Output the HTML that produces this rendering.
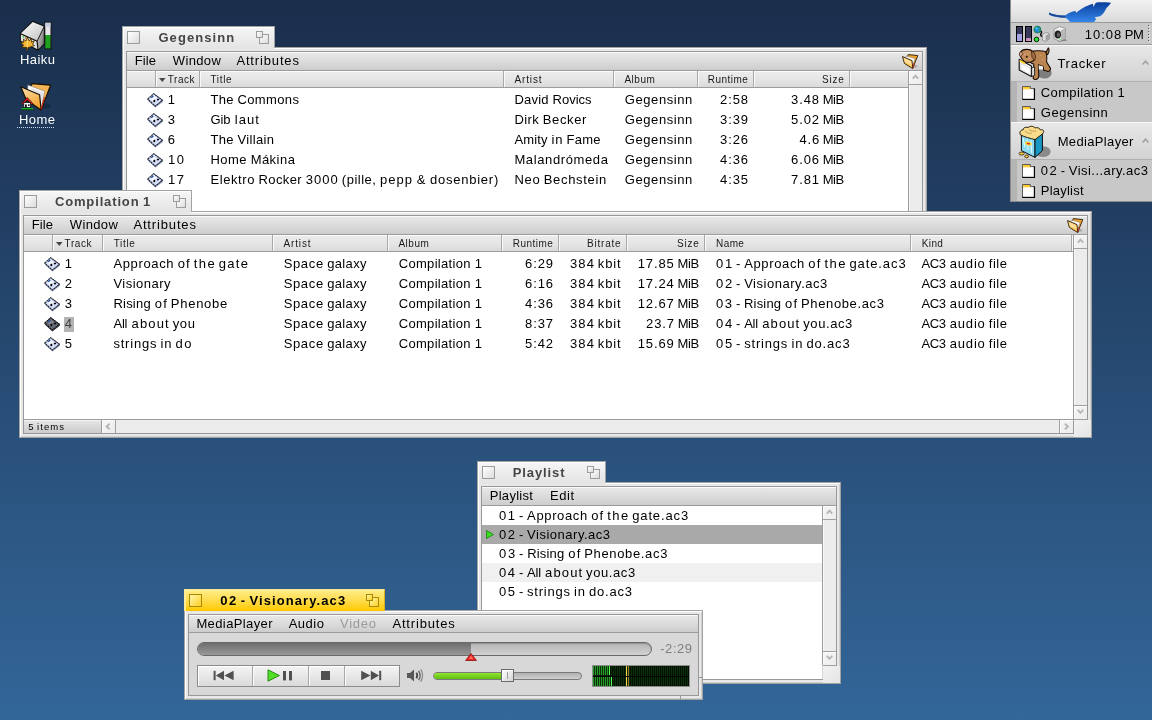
<!DOCTYPE html>
<html><head><meta charset="utf-8"><title>Haiku</title>
<style>
html,body{margin:0;padding:0;}
body{width:1152px;height:720px;overflow:hidden;position:relative;font-family:"Liberation Sans", sans-serif;
background:linear-gradient(to bottom,#1a2e4b 0%,#336699 100%);}
div{position:absolute;box-sizing:border-box;}
svg{position:absolute;overflow:visible;}
.t{position:absolute;white-space:pre;line-height:1;font-family:"Liberation Sans", sans-serif;}

.frame{background:#e8e8e8;border:1px solid #a2a2a2;box-shadow:inset 1px 1px 0 #fff, inset -1px -1px 0 #d0d0d0;}
.inner{border:1px solid #989898;background:#d8d8d8;}
.tab{border:1px solid #a2a2a2;border-bottom:none;box-shadow:inset 1px 1px 0 #fff;background:linear-gradient(to bottom,#f6f6f6,#e4e4e4);}
.tab.act{background:linear-gradient(to bottom,#ffec88,#ffdc4c 50%,#ffc800);border-color:#ffe98a #d8b020 #ffc700 #ffe98a;box-shadow:inset 1px 1px 0 #fff0a0;}
.btn{border:1px solid #9c9c9c;background:linear-gradient(135deg,#ffffff,#dcdcdc);}
.act .btn{border-color:#a88a00;background:linear-gradient(135deg,#fff6b0,#ffcf20);}
.menu{background:linear-gradient(to bottom,#e8e8e8,#dcdcdc 50%,#cdcdcd);border-bottom:1px solid #9c9c9c;box-shadow:inset 0 1px 0 #fafafa;}
.hdr{background:linear-gradient(to bottom,#ececec,#e6e6e6 50%,#dadada);border-bottom:1px solid #9c9c9c;box-shadow:inset 0 1px 0 #fcfcfc;}
.hdiv{background:#a8a8a8;box-shadow:1px 0 0 #fafafa;}
.white{background:#fff;}
.sb{background:#ececec;border-left:1px solid #9c9c9c;}
.sbh{background:#ececec;border-top:1px solid #9c9c9c;}
.sbtn{background:linear-gradient(135deg,#f6f6f6,#ececec);box-shadow:inset 1px 1px 0 #fbfbfb;}

</style></head><body><div id="wrap" style="left:0;top:0;width:1152px;height:720px;transform:translateZ(0);will-change:transform;">
<svg style="left:19px;top:20px" width="34" height="32" viewBox="0 0 34 32">
<defs><linearGradient id="dk1" x1="0" y1="0" x2="1" y2="1"><stop offset="0" stop-color="#ffffff"/><stop offset="1" stop-color="#c0c0c0"/></linearGradient>
<linearGradient id="dk2" x1="0" y1="0" x2="1" y2="0.6"><stop offset="0" stop-color="#d4d4d4"/><stop offset="1" stop-color="#787878"/></linearGradient></defs>
<polygon points="0.9,13.2 13.6,0.7 25.8,5.7 25.8,24.2 19.2,30.8 0.9,21.4" fill="#0c0c0c"/>
<polygon points="2,13.3 13.7,1.9 24.7,6.4 18,20.4" fill="url(#dk1)"/>
<polygon points="1.9,14.4 17.5,21.4 18.4,29.2 1.9,20.7" fill="#e2e2e2"/>
<polygon points="18.7,21 24.8,8 24.8,23.7 19.5,29.3" fill="url(#dk2)"/>
<rect x="25.4" y="1.8" width="7.2" height="27.6" fill="#161616"/>
<rect x="26.3" y="2.8" width="5.2" height="12.4" fill="#e6e6ea"/>
<rect x="26.3" y="2.8" width="5.2" height="4" fill="#c4cce0"/>
<rect x="26.3" y="15" width="5.2" height="13.4" fill="#1fa01f"/>
<circle cx="4.6" cy="17" r="0.9" fill="#40d040"/><circle cx="6.6" cy="18" r="0.8" fill="#e03020"/>
<path d="M8.4 17.2 L10 20.8 L12.4 18.6 L12.4 22.2 L15.4 20.6 L13.6 24.4 L15.6 25.6 L10.6 27.2 L9 27.6 L8.6 30.4 L7.6 30.4 L7.8 27.6 L2.6 27 L4.6 25.2 L1.6 22.6 L4.8 22.2 L4.4 19.2 L7 21 Z" fill="#f6b832" stroke="#3a2400" stroke-width="0.8" stroke-linejoin="round"/>
<path d="M8.4 19.5 L8.3 27" stroke="#fff0b0" stroke-width="0.6"/>
</svg>
<span class="t" style="left:20.0px;top:53.0px;font-size:13px;letter-spacing:0.44px;color:#fff;">Haiku</span>
<svg style="left:19px;top:82px" width="34" height="30" viewBox="0 0 34 30">
<defs><linearGradient id="fo1" x1="0" y1="0" x2="0.6" y2="1"><stop offset="0" stop-color="#fbe2b4"/><stop offset="1" stop-color="#f2a430"/></linearGradient></defs>
<ellipse cx="27" cy="24" rx="5" ry="2.6" fill="#102038" opacity="0.55"/>
<polygon points="13,1.6 31.6,3.2 22.3,27.6 7,14" fill="#f2b455" stroke="#1a1000" stroke-width="1.2" stroke-linejoin="round"/>
<polygon points="8.9,2.9 25.6,9.2 22.6,24.2 8,14" fill="#fafafc" stroke="#707070" stroke-width="0.5"/>
<polygon points="12,6 25,10.4 21.6,22 " fill="#d8d8e0" opacity="0.7"/>
<polygon points="1.8,4.8 20.6,12.7 22.1,27.9 7.2,17.8" fill="url(#fo1)" stroke="#1a1000" stroke-width="1.2" stroke-linejoin="round"/>
<path d="M22.2 27.4 L25.4 15" stroke="#d02010" stroke-width="1"/>
<polygon points="2.6,21.4 8.2,15.4 13.8,21.4 12.6,22.6 8.2,18 3.8,22.6" fill="#e81818" stroke="#200" stroke-width="0.6"/>
<rect x="4.8" y="20.6" width="6.8" height="5" fill="#fff" stroke="#111" stroke-width="0.8"/>
<rect x="6" y="22.4" width="1.8" height="3.2" fill="#111"/><rect x="9" y="22.4" width="1.6" height="1.6" fill="#111"/>
<rect x="2.6" y="26.2" width="11.4" height="1.4" fill="#10d810"/><rect x="2.6" y="27.4" width="11.4" height="0.8" fill="#103010"/>
</svg>
<span class="t" style="left:19.0px;top:113.0px;font-size:13px;letter-spacing:0.44px;color:#fff;">Home</span>
<div style="left:17px;top:127px;width:38px;height:1px;background:repeating-linear-gradient(to right,#c8d8f0 0 1px,transparent 1px 2px);"></div>
<div class="frame" style="left:122px;top:47px;width:805px;height:200px;"></div>
<div class="tab" style="left:122px;top:26px;width:153px;height:22px;">
<div class="btn" style="left:4px;top:4px;width:13px;height:13px"></div>
<div class="btn" style="left:136px;top:7px;width:10px;height:10px"></div>
<div class="btn" style="left:133px;top:4px;width:7px;height:7px"></div>
</div>
<div style="left:124px;top:47px;width:150px;height:2px;background:#e5e5e5;"></div>
<span class="t" style="left:158.4px;top:30.5px;font-size:13px;letter-spacing:1.08px;color:#454545;font-weight:bold;">Gegensinn</span>
<div class="inner" style="left:126px;top:51px;width:797px;height:192px;"></div>
<div class="menu" style="left:127px;top:52px;width:795px;height:19px;"></div>
<span class="t" style="left:134.8px;top:54.0px;font-size:13px;letter-spacing:0.08px;color:#000;">File</span>
<span class="t" style="left:172.8px;top:54.0px;font-size:13px;letter-spacing:0.35px;color:#000;">Window</span>
<span class="t" style="left:236.4px;top:54.0px;font-size:13px;letter-spacing:0.85px;color:#000;">Attributes</span>
<svg style="left:902px;top:54px" width="17" height="16" viewBox="0 0 17 16"><ellipse cx="13" cy="12.3" rx="2.5" ry="1.4" fill="#9a9a9a" opacity="0.7"/><polygon points="6.3,0.6 15.8,1.6 10.8,14 3.2,8" fill="#f2a52c" stroke="#2a1a08" stroke-width="0.9" stroke-linejoin="round"/><polygon points="4.2,2 13,4.4 10.6,12.4 3.2,7" fill="#f8f8fa" stroke="#666" stroke-width="0.4"/><polygon points="0.5,2.6 10,6.6 10.8,14.6 2.4,9.4" fill="#ffc95a" stroke="#2a1a08" stroke-width="0.9" stroke-linejoin="round"/><polygon points="1.6,3.8 9,7.2 9.6,11 3,8.2" fill="#ffe2a8" opacity="0.85"/><path d="M10.8 14.2 L12.2 9" stroke="#c82010" stroke-width="0.8"/></svg>
<div class="hdr" style="left:127px;top:71px;width:781px;height:17px;"></div>
<div class="hdiv" style="left:155px;top:71px;width:1px;height:16px;"></div>
<div class="hdiv" style="left:199px;top:71px;width:1px;height:16px;"></div>
<div class="hdiv" style="left:503px;top:71px;width:1px;height:16px;"></div>
<div class="hdiv" style="left:613px;top:71px;width:1px;height:16px;"></div>
<div class="hdiv" style="left:697px;top:71px;width:1px;height:16px;"></div>
<div class="hdiv" style="left:753px;top:71px;width:1px;height:16px;"></div>
<div class="hdiv" style="left:849px;top:71px;width:1px;height:16px;"></div>
<span class="t" style="left:167.70000000000002px;top:74.53px;font-size:10px;letter-spacing:0.57px;color:#1a1a1a;">Track</span>
<span class="t" style="left:210.4px;top:74.53px;font-size:10px;letter-spacing:0.67px;color:#1a1a1a;">Title</span>
<span class="t" style="left:514.4px;top:74.53px;font-size:10px;letter-spacing:0.88px;color:#1a1a1a;">Artist</span>
<span class="t" style="left:624.4px;top:74.53px;font-size:10px;letter-spacing:0.54px;color:#1a1a1a;">Album</span>
<span class="t" style="left:707.6999999999999px;top:74.53px;font-size:10px;letter-spacing:0.49px;color:#1a1a1a;">Runtime</span>
<span class="t" style="left:822.1px;top:74.53px;font-size:10px;letter-spacing:0.78px;color:#1a1a1a;">Size</span>
<svg style="left:159.3px;top:78px" width="6.6" height="4" viewBox="0 0 6.6 4"><polygon points="0,0 6.6,0 3.3,4" fill="#484848"/></svg>
<div class="white" style="left:127px;top:88px;width:781px;height:130px;"></div>
<div class="sb" style="left:908px;top:71px;width:14px;height:200px;box-shadow:inset 1px 0 0 #f8f8f8;"></div>
<div class="sbtn" style="left:909px;top:71px;width:13px;height:14px;border-bottom:1px solid #a0a0a0;"><svg style="left:3px;top:3.4px" width="7" height="5.5" viewBox="0 0 7 5.5"><path d="M0.8 4.6 L3.5 1.6 L6.2 4.6" fill="none" stroke="#b6b6b6" stroke-width="1.9"/></svg></div>
<div class="sbtn" style="left:909px;top:257px;width:13px;height:14px;border-top:1px solid #a0a0a0;"><svg style="left:3px;top:3.4px" width="7" height="5.5" viewBox="0 0 7 5.5"><path d="M0.8 0.9 L3.5 3.9 L6.2 0.9" fill="none" stroke="#b6b6b6" stroke-width="1.9"/></svg></div>
<svg style="left:147px;top:93.4px" width="17" height="15" viewBox="0 0 17 15"><polygon points="0.8,6.6 8.2,13.2 15.6,7.6 15.8,8.8 8.4,14.4 0.8,7.6" fill="#7c88a8"/><polygon points="0.7,6.1 6.7,0.6 15.5,7.3 8.3,13" fill="#d6e0fb" stroke="#242834" stroke-width="1.15" stroke-dasharray="2 0.5" stroke-linejoin="round"/><polygon points="3.4,6.1 6.8,3 9.6,5.1 6,8.2" fill="#ffffff" opacity="0.75"/><ellipse cx="7.3" cy="8" rx="1" ry="1.3" fill="#000"/><ellipse cx="11" cy="6.5" rx="1.2" ry="0.95" fill="#000" transform="rotate(-30 11 6.5)"/><path d="M4.2 4.7 L6.2 3" stroke="#1a4a9a" stroke-width="1.4"/></svg>
<span class="t" style="left:167.84px;top:93.0px;font-size:13px;letter-spacing:0px;color:#000;">1</span>
<span class="t" style="left:210.4px;top:93.0px;font-size:13px;letter-spacing:0.36px;color:#000;">The</span><span class="t" style="left:237.55px;top:93.0px;font-size:13px;letter-spacing:0.35px;color:#000;">Commons</span>
<span class="t" style="left:514.4px;top:93.0px;font-size:13px;letter-spacing:0.21px;color:#000;">David</span><span class="t" style="left:552.5px;top:93.0px;font-size:13px;letter-spacing:0.02px;color:#000;">Rovics</span>
<span class="t" style="left:624.8px;top:93.0px;font-size:13px;letter-spacing:0.58px;color:#000;">Gegensinn</span>
<span class="t" style="left:720.1px;top:93.0px;font-size:13px;letter-spacing:0.9px;color:#000;">2:58</span>
<span class="t" style="left:791.1px;top:93.0px;font-size:13px;letter-spacing:0.86px;color:#000;">3.48</span><span class="t" style="left:822.7px;top:93.0px;font-size:13px;letter-spacing:-0.45px;color:#000;">MiB</span>
<svg style="left:147px;top:113.4px" width="17" height="15" viewBox="0 0 17 15"><polygon points="0.8,6.6 8.2,13.2 15.6,7.6 15.8,8.8 8.4,14.4 0.8,7.6" fill="#7c88a8"/><polygon points="0.7,6.1 6.7,0.6 15.5,7.3 8.3,13" fill="#d6e0fb" stroke="#242834" stroke-width="1.15" stroke-dasharray="2 0.5" stroke-linejoin="round"/><polygon points="3.4,6.1 6.8,3 9.6,5.1 6,8.2" fill="#ffffff" opacity="0.75"/><ellipse cx="7.3" cy="8" rx="1" ry="1.3" fill="#000"/><ellipse cx="11" cy="6.5" rx="1.2" ry="0.95" fill="#000" transform="rotate(-30 11 6.5)"/><path d="M4.2 4.7 L6.2 3" stroke="#1a4a9a" stroke-width="1.4"/></svg>
<span class="t" style="left:167.84px;top:113.0px;font-size:13px;letter-spacing:0px;color:#000;">3</span>
<span class="t" style="left:210.4px;top:113.0px;font-size:13px;letter-spacing:-0.01px;color:#000;">Gib</span><span class="t" style="left:234.65px;top:113.0px;font-size:13px;letter-spacing:1.1px;color:#000;">laut</span>
<span class="t" style="left:514.4px;top:113.0px;font-size:13px;letter-spacing:0.4px;color:#000;">Dirk</span><span class="t" style="left:542.75px;top:113.0px;font-size:13px;letter-spacing:0.62px;color:#000;">Becker</span>
<span class="t" style="left:624.8px;top:113.0px;font-size:13px;letter-spacing:0.58px;color:#000;">Gegensinn</span>
<span class="t" style="left:720.1px;top:113.0px;font-size:13px;letter-spacing:0.9px;color:#000;">3:39</span>
<span class="t" style="left:791.1px;top:113.0px;font-size:13px;letter-spacing:0.86px;color:#000;">5.02</span><span class="t" style="left:822.7px;top:113.0px;font-size:13px;letter-spacing:-0.45px;color:#000;">MiB</span>
<svg style="left:147px;top:133.4px" width="17" height="15" viewBox="0 0 17 15"><polygon points="0.8,6.6 8.2,13.2 15.6,7.6 15.8,8.8 8.4,14.4 0.8,7.6" fill="#7c88a8"/><polygon points="0.7,6.1 6.7,0.6 15.5,7.3 8.3,13" fill="#d6e0fb" stroke="#242834" stroke-width="1.15" stroke-dasharray="2 0.5" stroke-linejoin="round"/><polygon points="3.4,6.1 6.8,3 9.6,5.1 6,8.2" fill="#ffffff" opacity="0.75"/><ellipse cx="7.3" cy="8" rx="1" ry="1.3" fill="#000"/><ellipse cx="11" cy="6.5" rx="1.2" ry="0.95" fill="#000" transform="rotate(-30 11 6.5)"/><path d="M4.2 4.7 L6.2 3" stroke="#1a4a9a" stroke-width="1.4"/></svg>
<span class="t" style="left:167.84px;top:133.0px;font-size:13px;letter-spacing:0px;color:#000;">6</span>
<span class="t" style="left:210.4px;top:133.0px;font-size:13px;letter-spacing:0.39px;color:#000;">The</span><span class="t" style="left:237.61px;top:133.0px;font-size:13px;letter-spacing:0.31px;color:#000;">Villain</span>
<span class="t" style="left:514.4px;top:133.0px;font-size:13px;letter-spacing:0.15px;color:#000;">Amity</span><span class="t" style="left:551.49px;top:133.0px;font-size:13px;letter-spacing:0.9px;color:#000;">in</span><span class="t" style="left:566.52px;top:133.0px;font-size:13px;letter-spacing:0.28px;color:#000;">Fame</span>
<span class="t" style="left:624.8px;top:133.0px;font-size:13px;letter-spacing:0.58px;color:#000;">Gegensinn</span>
<span class="t" style="left:720.1px;top:133.0px;font-size:13px;letter-spacing:0.9px;color:#000;">3:26</span>
<span class="t" style="left:799.4px;top:133.0px;font-size:13px;letter-spacing:0.85px;color:#000;">4.6</span><span class="t" style="left:822.77px;top:133.0px;font-size:13px;letter-spacing:-0.45px;color:#000;">MiB</span>
<svg style="left:147px;top:153.4px" width="17" height="15" viewBox="0 0 17 15"><polygon points="0.8,6.6 8.2,13.2 15.6,7.6 15.8,8.8 8.4,14.4 0.8,7.6" fill="#7c88a8"/><polygon points="0.7,6.1 6.7,0.6 15.5,7.3 8.3,13" fill="#d6e0fb" stroke="#242834" stroke-width="1.15" stroke-dasharray="2 0.5" stroke-linejoin="round"/><polygon points="3.4,6.1 6.8,3 9.6,5.1 6,8.2" fill="#ffffff" opacity="0.75"/><ellipse cx="7.3" cy="8" rx="1" ry="1.3" fill="#000"/><ellipse cx="11" cy="6.5" rx="1.2" ry="0.95" fill="#000" transform="rotate(-30 11 6.5)"/><path d="M4.2 4.7 L6.2 3" stroke="#1a4a9a" stroke-width="1.4"/></svg>
<span class="t" style="left:168.0px;top:153.0px;font-size:13px;letter-spacing:1.44px;color:#000;">10</span>
<span class="t" style="left:210.4px;top:153.0px;font-size:13px;letter-spacing:0.51px;color:#000;">Home</span><span class="t" style="left:250.64px;top:153.0px;font-size:13px;letter-spacing:0.47px;color:#000;">Mákina</span>
<span class="t" style="left:514.4px;top:153.0px;font-size:13px;letter-spacing:0.62px;color:#000;">Malandrómeda</span>
<span class="t" style="left:624.8px;top:153.0px;font-size:13px;letter-spacing:0.58px;color:#000;">Gegensinn</span>
<span class="t" style="left:720.1px;top:153.0px;font-size:13px;letter-spacing:0.9px;color:#000;">4:36</span>
<span class="t" style="left:791.1px;top:153.0px;font-size:13px;letter-spacing:0.86px;color:#000;">6.06</span><span class="t" style="left:822.7px;top:153.0px;font-size:13px;letter-spacing:-0.45px;color:#000;">MiB</span>
<svg style="left:147px;top:173.4px" width="17" height="15" viewBox="0 0 17 15"><polygon points="0.8,6.6 8.2,13.2 15.6,7.6 15.8,8.8 8.4,14.4 0.8,7.6" fill="#7c88a8"/><polygon points="0.7,6.1 6.7,0.6 15.5,7.3 8.3,13" fill="#d6e0fb" stroke="#242834" stroke-width="1.15" stroke-dasharray="2 0.5" stroke-linejoin="round"/><polygon points="3.4,6.1 6.8,3 9.6,5.1 6,8.2" fill="#ffffff" opacity="0.75"/><ellipse cx="7.3" cy="8" rx="1" ry="1.3" fill="#000"/><ellipse cx="11" cy="6.5" rx="1.2" ry="0.95" fill="#000" transform="rotate(-30 11 6.5)"/><path d="M4.2 4.7 L6.2 3" stroke="#1a4a9a" stroke-width="1.4"/></svg>
<span class="t" style="left:168.0px;top:173.0px;font-size:13px;letter-spacing:1.44px;color:#000;">17</span>
<span class="t" style="left:210.4px;top:173.0px;font-size:13px;letter-spacing:0.61px;color:#000;">Elektro</span><span class="t" style="left:258.55px;top:173.0px;font-size:13px;letter-spacing:0.39px;color:#000;">Rocker</span><span class="t" style="left:305.7px;top:173.0px;font-size:13px;letter-spacing:1.06px;color:#000;">3000</span><span class="t" style="left:341.81px;top:173.0px;font-size:13px;letter-spacing:0.51px;color:#000;">(pille,</span><span class="t" style="left:379.93px;top:173.0px;font-size:13px;letter-spacing:1.06px;color:#000;">pepp</span><span class="t" style="left:416.72px;top:173.0px;font-size:13px;letter-spacing:0px;color:#000;">&amp;</span><span class="t" style="left:430.09px;top:173.0px;font-size:13px;letter-spacing:0.75px;color:#000;">dosenbier)</span>
<span class="t" style="left:514.4px;top:173.0px;font-size:13px;letter-spacing:0.7px;color:#000;">Neo</span><span class="t" style="left:543.69px;top:173.0px;font-size:13px;letter-spacing:0.69px;color:#000;">Bechstein</span>
<span class="t" style="left:624.8px;top:173.0px;font-size:13px;letter-spacing:0.58px;color:#000;">Gegensinn</span>
<span class="t" style="left:720.1px;top:173.0px;font-size:13px;letter-spacing:0.9px;color:#000;">4:35</span>
<span class="t" style="left:791.1px;top:173.0px;font-size:13px;letter-spacing:0.86px;color:#000;">7.81</span><span class="t" style="left:822.7px;top:173.0px;font-size:13px;letter-spacing:-0.45px;color:#000;">MiB</span>
<div class="frame" style="left:19px;top:211px;width:1073px;height:227px;"></div>
<div class="tab" style="left:19px;top:190px;width:173px;height:22px;">
<div class="btn" style="left:4px;top:4px;width:13px;height:13px"></div>
<div class="btn" style="left:156px;top:7px;width:10px;height:10px"></div>
<div class="btn" style="left:153px;top:4px;width:7px;height:7px"></div>
</div>
<div style="left:21px;top:211px;width:170px;height:2px;background:#e5e5e5;"></div>
<span class="t" style="left:54.9px;top:194.5px;font-size:13px;letter-spacing:0.86px;color:#454545;font-weight:bold;">Compilation</span><span class="t" style="left:143.0px;top:194.5px;font-size:13px;letter-spacing:0px;color:#454545;font-weight:bold;">1</span>
<div class="inner" style="left:23px;top:215px;width:1065px;height:219px;"></div>
<div class="menu" style="left:24px;top:216px;width:1063px;height:19px;"></div>
<span class="t" style="left:31.799999999999997px;top:218.0px;font-size:13px;letter-spacing:0.08px;color:#000;">File</span>
<span class="t" style="left:69.80000000000001px;top:218.0px;font-size:13px;letter-spacing:0.35px;color:#000;">Window</span>
<span class="t" style="left:133.4px;top:218.0px;font-size:13px;letter-spacing:0.85px;color:#000;">Attributes</span>
<svg style="left:1067px;top:218px" width="17" height="16" viewBox="0 0 17 16"><ellipse cx="13" cy="12.3" rx="2.5" ry="1.4" fill="#9a9a9a" opacity="0.7"/><polygon points="6.3,0.6 15.8,1.6 10.8,14 3.2,8" fill="#f2a52c" stroke="#2a1a08" stroke-width="0.9" stroke-linejoin="round"/><polygon points="4.2,2 13,4.4 10.6,12.4 3.2,7" fill="#f8f8fa" stroke="#666" stroke-width="0.4"/><polygon points="0.5,2.6 10,6.6 10.8,14.6 2.4,9.4" fill="#ffc95a" stroke="#2a1a08" stroke-width="0.9" stroke-linejoin="round"/><polygon points="1.6,3.8 9,7.2 9.6,11 3,8.2" fill="#ffe2a8" opacity="0.85"/><path d="M10.8 14.2 L12.2 9" stroke="#c82010" stroke-width="0.8"/></svg>
<div class="hdr" style="left:24px;top:235px;width:1049px;height:17px;"></div>
<div class="hdiv" style="left:52px;top:235px;width:1px;height:16px;"></div>
<div class="hdiv" style="left:102px;top:235px;width:1px;height:16px;"></div>
<div class="hdiv" style="left:272px;top:235px;width:1px;height:16px;"></div>
<div class="hdiv" style="left:387px;top:235px;width:1px;height:16px;"></div>
<div class="hdiv" style="left:501px;top:235px;width:1px;height:16px;"></div>
<div class="hdiv" style="left:558px;top:235px;width:1px;height:16px;"></div>
<div class="hdiv" style="left:626px;top:235px;width:1px;height:16px;"></div>
<div class="hdiv" style="left:704px;top:235px;width:1px;height:16px;"></div>
<div class="hdiv" style="left:910px;top:235px;width:1px;height:16px;"></div>
<div class="hdiv" style="left:1071px;top:235px;width:1px;height:16px;"></div>
<span class="t" style="left:64.60000000000001px;top:238.53px;font-size:10px;letter-spacing:0.59px;color:#1a1a1a;">Track</span>
<span class="t" style="left:113.7px;top:238.53px;font-size:10px;letter-spacing:0.67px;color:#1a1a1a;">Title</span>
<span class="t" style="left:283.4px;top:238.53px;font-size:10px;letter-spacing:0.88px;color:#1a1a1a;">Artist</span>
<span class="t" style="left:398.4px;top:238.53px;font-size:10px;letter-spacing:0.54px;color:#1a1a1a;">Album</span>
<span class="t" style="left:512.6999999999999px;top:238.53px;font-size:10px;letter-spacing:0.49px;color:#1a1a1a;">Runtime</span>
<span class="t" style="left:587.1px;top:238.53px;font-size:10px;letter-spacing:0.77px;color:#1a1a1a;">Bitrate</span>
<span class="t" style="left:677.1px;top:238.53px;font-size:10px;letter-spacing:0.78px;color:#1a1a1a;">Size</span>
<span class="t" style="left:716.1px;top:238.53px;font-size:10px;letter-spacing:0.38px;color:#1a1a1a;">Name</span>
<span class="t" style="left:921.6999999999999px;top:238.53px;font-size:10px;letter-spacing:0.4px;color:#1a1a1a;">Kind</span>
<svg style="left:56.4px;top:242px" width="6.6" height="4" viewBox="0 0 6.6 4"><polygon points="0,0 6.6,0 3.3,4" fill="#484848"/></svg>
<div class="white" style="left:24px;top:252px;width:1049px;height:167px;"></div>
<div class="sb" style="left:1073px;top:235px;width:14px;height:184px;box-shadow:inset 1px 0 0 #f8f8f8;"></div>
<div class="sbtn" style="left:1074px;top:235px;width:13px;height:14px;border-bottom:1px solid #a0a0a0;"><svg style="left:3px;top:3.4px" width="7" height="5.5" viewBox="0 0 7 5.5"><path d="M0.8 4.6 L3.5 1.6 L6.2 4.6" fill="none" stroke="#b6b6b6" stroke-width="1.9"/></svg></div>
<div class="sbtn" style="left:1074px;top:405px;width:13px;height:14px;border-top:1px solid #a0a0a0;"><svg style="left:3px;top:3.4px" width="7" height="5.5" viewBox="0 0 7 5.5"><path d="M0.8 0.9 L3.5 3.9 L6.2 0.9" fill="none" stroke="#b6b6b6" stroke-width="1.9"/></svg></div>
<div class="sbh" style="left:24px;top:419px;width:1049px;height:14px;"></div>
<div style="left:24px;top:419px;width:78px;height:14px;background:linear-gradient(to bottom,#e6e6e6,#cccccc);border-top:1px solid #9c9c9c;border-right:1px solid #9c9c9c;box-shadow:inset 0 1px 0 #f4f4f4;"></div>
<span class="t" style="left:28.36px;top:421.96px;font-size:9.5px;letter-spacing:0px;color:#000;">5</span><span class="t" style="left:37.0px;top:421.96px;font-size:9.5px;letter-spacing:1.08px;color:#000;">items</span>
<div class="sbtn" style="left:102px;top:420px;width:14px;height:13px;border-right:1px solid #a0a0a0;"><svg style="left:3.4px;top:3.2px" width="5.5" height="7" viewBox="0 0 5.5 7"><path d="M4.6 0.8 L1.6 3.5 L4.6 6.2" fill="none" stroke="#b6b6b6" stroke-width="1.9"/></svg></div>
<div class="sbtn" style="left:1059px;top:420px;width:14px;height:13px;border-left:1px solid #a0a0a0;"><svg style="left:3.8px;top:3.2px" width="5.5" height="7" viewBox="0 0 5.5 7"><path d="M0.9 0.8 L3.9 3.5 L0.9 6.2" fill="none" stroke="#b6b6b6" stroke-width="1.9"/></svg></div>
<div style="left:1074px;top:420px;width:17px;height:17px;background:linear-gradient(135deg,#f2f2f2,#e4e4e4);"></div>
<div style="left:1074px;top:419px;width:14px;height:1px;background:#a0a0a0;"></div>
<div style="left:1073px;top:419px;width:1px;height:15px;background:#9c9c9c;"></div>
<svg style="left:44px;top:257.4px" width="17" height="15" viewBox="0 0 17 15"><polygon points="0.8,6.6 8.2,13.2 15.6,7.6 15.8,8.8 8.4,14.4 0.8,7.6" fill="#7c88a8"/><polygon points="0.7,6.1 6.7,0.6 15.5,7.3 8.3,13" fill="#d6e0fb" stroke="#242834" stroke-width="1.15" stroke-dasharray="2 0.5" stroke-linejoin="round"/><polygon points="3.4,6.1 6.8,3 9.6,5.1 6,8.2" fill="#ffffff" opacity="0.75"/><ellipse cx="7.3" cy="8" rx="1" ry="1.3" fill="#000"/><ellipse cx="11" cy="6.5" rx="1.2" ry="0.95" fill="#000" transform="rotate(-30 11 6.5)"/><path d="M4.2 4.7 L6.2 3" stroke="#1a4a9a" stroke-width="1.4"/></svg>
<span class="t" style="left:64.84px;top:257.0px;font-size:13px;letter-spacing:0px;color:#000;">1</span>
<span class="t" style="left:113.4px;top:257.0px;font-size:13px;letter-spacing:0.65px;color:#000;">Approach</span><span class="t" style="left:177.64px;top:257.0px;font-size:13px;letter-spacing:1.2px;color:#000;">of</span><span class="t" style="left:193.7px;top:257.0px;font-size:13px;letter-spacing:1.5px;color:#000;">the</span><span class="t" style="left:218.79px;top:257.0px;font-size:13px;letter-spacing:1.27px;color:#000;">gate</span>
<span class="t" style="left:283.7px;top:257.0px;font-size:13px;letter-spacing:0.64px;color:#000;">Space</span><span class="t" style="left:327.17px;top:257.0px;font-size:13px;letter-spacing:0.37px;color:#000;">galaxy</span>
<span class="t" style="left:398.7px;top:257.0px;font-size:13px;letter-spacing:0.32px;color:#000;">Compilation</span><span class="t" style="left:474.75px;top:257.0px;font-size:13px;letter-spacing:0px;color:#000;">1</span>
<span class="t" style="left:525.1px;top:257.0px;font-size:13px;letter-spacing:0.87px;color:#000;">6:29</span>
<span class="t" style="left:570.1px;top:257.0px;font-size:13px;letter-spacing:1.04px;color:#000;">384</span><span class="t" style="left:597.83px;top:257.0px;font-size:13px;letter-spacing:0.85px;color:#000;">kbit</span>
<span class="t" style="left:637.7px;top:257.0px;font-size:13px;letter-spacing:0.9px;color:#000;">17.85</span><span class="t" style="left:677.62px;top:257.0px;font-size:13px;letter-spacing:-0.45px;color:#000;">MiB</span>
<span class="t" style="left:716.1px;top:257.0px;font-size:13px;letter-spacing:1.58px;color:#000;">01</span><span class="t" style="left:735.99px;top:257.0px;font-size:13px;letter-spacing:0px;color:#000;">-</span><span class="t" style="left:744.17px;top:257.0px;font-size:13px;letter-spacing:0.64px;color:#000;">Approach</span><span class="t" style="left:808.34px;top:257.0px;font-size:13px;letter-spacing:1.2px;color:#000;">of</span><span class="t" style="left:824.39px;top:257.0px;font-size:13px;letter-spacing:1.49px;color:#000;">the</span><span class="t" style="left:849.45px;top:257.0px;font-size:13px;letter-spacing:0.9px;color:#000;">gate.ac3</span>
<span class="t" style="left:921.54px;top:257.0px;font-size:13px;letter-spacing:-0.45px;color:#000;">AC3</span><span class="t" style="left:949.77px;top:257.0px;font-size:13px;letter-spacing:0.82px;color:#000;">audio</span><span class="t" style="left:988.86px;top:257.0px;font-size:13px;letter-spacing:0.47px;color:#000;">file</span>
<svg style="left:44px;top:277.4px" width="17" height="15" viewBox="0 0 17 15"><polygon points="0.8,6.6 8.2,13.2 15.6,7.6 15.8,8.8 8.4,14.4 0.8,7.6" fill="#7c88a8"/><polygon points="0.7,6.1 6.7,0.6 15.5,7.3 8.3,13" fill="#d6e0fb" stroke="#242834" stroke-width="1.15" stroke-dasharray="2 0.5" stroke-linejoin="round"/><polygon points="3.4,6.1 6.8,3 9.6,5.1 6,8.2" fill="#ffffff" opacity="0.75"/><ellipse cx="7.3" cy="8" rx="1" ry="1.3" fill="#000"/><ellipse cx="11" cy="6.5" rx="1.2" ry="0.95" fill="#000" transform="rotate(-30 11 6.5)"/><path d="M4.2 4.7 L6.2 3" stroke="#1a4a9a" stroke-width="1.4"/></svg>
<span class="t" style="left:64.84px;top:277.0px;font-size:13px;letter-spacing:0px;color:#000;">2</span>
<span class="t" style="left:113.4px;top:277.0px;font-size:13px;letter-spacing:0.5px;color:#000;">Visionary</span>
<span class="t" style="left:283.7px;top:277.0px;font-size:13px;letter-spacing:0.64px;color:#000;">Space</span><span class="t" style="left:327.17px;top:277.0px;font-size:13px;letter-spacing:0.37px;color:#000;">galaxy</span>
<span class="t" style="left:398.7px;top:277.0px;font-size:13px;letter-spacing:0.32px;color:#000;">Compilation</span><span class="t" style="left:474.75px;top:277.0px;font-size:13px;letter-spacing:0px;color:#000;">1</span>
<span class="t" style="left:525.1px;top:277.0px;font-size:13px;letter-spacing:0.87px;color:#000;">6:16</span>
<span class="t" style="left:570.1px;top:277.0px;font-size:13px;letter-spacing:1.04px;color:#000;">384</span><span class="t" style="left:597.83px;top:277.0px;font-size:13px;letter-spacing:0.85px;color:#000;">kbit</span>
<span class="t" style="left:637.7px;top:277.0px;font-size:13px;letter-spacing:0.9px;color:#000;">17.24</span><span class="t" style="left:677.62px;top:277.0px;font-size:13px;letter-spacing:-0.45px;color:#000;">MiB</span>
<span class="t" style="left:716.1px;top:277.0px;font-size:13px;letter-spacing:1.57px;color:#000;">02</span><span class="t" style="left:735.98px;top:277.0px;font-size:13px;letter-spacing:0px;color:#000;">-</span><span class="t" style="left:744.15px;top:277.0px;font-size:13px;letter-spacing:0.53px;color:#000;">Visionary.ac3</span>
<span class="t" style="left:921.54px;top:277.0px;font-size:13px;letter-spacing:-0.45px;color:#000;">AC3</span><span class="t" style="left:949.77px;top:277.0px;font-size:13px;letter-spacing:0.82px;color:#000;">audio</span><span class="t" style="left:988.86px;top:277.0px;font-size:13px;letter-spacing:0.47px;color:#000;">file</span>
<svg style="left:44px;top:297.4px" width="17" height="15" viewBox="0 0 17 15"><polygon points="0.8,6.6 8.2,13.2 15.6,7.6 15.8,8.8 8.4,14.4 0.8,7.6" fill="#7c88a8"/><polygon points="0.7,6.1 6.7,0.6 15.5,7.3 8.3,13" fill="#d6e0fb" stroke="#242834" stroke-width="1.15" stroke-dasharray="2 0.5" stroke-linejoin="round"/><polygon points="3.4,6.1 6.8,3 9.6,5.1 6,8.2" fill="#ffffff" opacity="0.75"/><ellipse cx="7.3" cy="8" rx="1" ry="1.3" fill="#000"/><ellipse cx="11" cy="6.5" rx="1.2" ry="0.95" fill="#000" transform="rotate(-30 11 6.5)"/><path d="M4.2 4.7 L6.2 3" stroke="#1a4a9a" stroke-width="1.4"/></svg>
<span class="t" style="left:64.84px;top:297.0px;font-size:13px;letter-spacing:0px;color:#000;">3</span>
<span class="t" style="left:113.4px;top:297.0px;font-size:13px;letter-spacing:0.23px;color:#000;">Rising</span><span class="t" style="left:154.73px;top:297.0px;font-size:13px;letter-spacing:1.25px;color:#000;">of</span><span class="t" style="left:170.85px;top:297.0px;font-size:13px;letter-spacing:0.73px;color:#000;">Phenobe</span>
<span class="t" style="left:283.7px;top:297.0px;font-size:13px;letter-spacing:0.64px;color:#000;">Space</span><span class="t" style="left:327.17px;top:297.0px;font-size:13px;letter-spacing:0.37px;color:#000;">galaxy</span>
<span class="t" style="left:398.7px;top:297.0px;font-size:13px;letter-spacing:0.32px;color:#000;">Compilation</span><span class="t" style="left:474.75px;top:297.0px;font-size:13px;letter-spacing:0px;color:#000;">1</span>
<span class="t" style="left:525.1px;top:297.0px;font-size:13px;letter-spacing:0.87px;color:#000;">4:36</span>
<span class="t" style="left:570.1px;top:297.0px;font-size:13px;letter-spacing:1.04px;color:#000;">384</span><span class="t" style="left:597.83px;top:297.0px;font-size:13px;letter-spacing:0.85px;color:#000;">kbit</span>
<span class="t" style="left:637.7px;top:297.0px;font-size:13px;letter-spacing:0.9px;color:#000;">12.67</span><span class="t" style="left:677.62px;top:297.0px;font-size:13px;letter-spacing:-0.45px;color:#000;">MiB</span>
<span class="t" style="left:716.1px;top:297.0px;font-size:13px;letter-spacing:1.52px;color:#000;">03</span><span class="t" style="left:735.91px;top:297.0px;font-size:13px;letter-spacing:0px;color:#000;">-</span><span class="t" style="left:744.07px;top:297.0px;font-size:13px;letter-spacing:0.17px;color:#000;">Rising</span><span class="t" style="left:785.02px;top:297.0px;font-size:13px;letter-spacing:1.14px;color:#000;">of</span><span class="t" style="left:801.0px;top:297.0px;font-size:13px;letter-spacing:0.63px;color:#000;">Phenobe.ac3</span>
<span class="t" style="left:921.54px;top:297.0px;font-size:13px;letter-spacing:-0.45px;color:#000;">AC3</span><span class="t" style="left:949.77px;top:297.0px;font-size:13px;letter-spacing:0.82px;color:#000;">audio</span><span class="t" style="left:988.86px;top:297.0px;font-size:13px;letter-spacing:0.47px;color:#000;">file</span>
<svg style="left:44px;top:317.4px" width="17" height="15" viewBox="0 0 17 15"><polygon points="0.8,6.6 8.2,13.2 15.6,7.6 15.8,8.8 8.4,14.4 0.8,7.6" fill="#2c2f38"/><polygon points="0.7,6.1 6.7,0.6 15.5,7.3 8.3,13" fill="#646a76" stroke="#0c0d10" stroke-width="1.15" stroke-dasharray="2 0.5" stroke-linejoin="round"/><polygon points="3.4,6.1 6.8,3 9.6,5.1 6,8.2" fill="#858b97" opacity="0.75"/><ellipse cx="7.3" cy="8" rx="1" ry="1.3" fill="#000"/><ellipse cx="11" cy="6.5" rx="1.2" ry="0.95" fill="#000" transform="rotate(-30 11 6.5)"/><path d="M4.2 4.7 L6.2 3" stroke="#1a4a9a" stroke-width="1.4"/></svg>
<div style="left:64px;top:317px;width:10px;height:15px;background:#b4b4b4;"></div>
<span class="t" style="left:64.84px;top:317.0px;font-size:13px;letter-spacing:0px;color:#404040;">4</span>
<span class="t" style="left:113.4px;top:317.0px;font-size:13px;letter-spacing:-0.18px;color:#000;">All</span><span class="t" style="left:131.51px;top:317.0px;font-size:13px;letter-spacing:1.17px;color:#000;">about</span><span class="t" style="left:172.76px;top:317.0px;font-size:13px;letter-spacing:0.59px;color:#000;">you</span>
<span class="t" style="left:283.7px;top:317.0px;font-size:13px;letter-spacing:0.64px;color:#000;">Space</span><span class="t" style="left:327.17px;top:317.0px;font-size:13px;letter-spacing:0.37px;color:#000;">galaxy</span>
<span class="t" style="left:398.7px;top:317.0px;font-size:13px;letter-spacing:0.32px;color:#000;">Compilation</span><span class="t" style="left:474.75px;top:317.0px;font-size:13px;letter-spacing:0px;color:#000;">1</span>
<span class="t" style="left:525.1px;top:317.0px;font-size:13px;letter-spacing:0.87px;color:#000;">8:37</span>
<span class="t" style="left:570.1px;top:317.0px;font-size:13px;letter-spacing:1.04px;color:#000;">384</span><span class="t" style="left:597.83px;top:317.0px;font-size:13px;letter-spacing:0.85px;color:#000;">kbit</span>
<span class="t" style="left:646.1px;top:317.0px;font-size:13px;letter-spacing:0.86px;color:#000;">23.7</span><span class="t" style="left:677.7px;top:317.0px;font-size:13px;letter-spacing:-0.45px;color:#000;">MiB</span>
<span class="t" style="left:716.1px;top:317.0px;font-size:13px;letter-spacing:1.56px;color:#000;">04</span><span class="t" style="left:735.97px;top:317.0px;font-size:13px;letter-spacing:0px;color:#000;">-</span><span class="t" style="left:744.14px;top:317.0px;font-size:13px;letter-spacing:-0.21px;color:#000;">All</span><span class="t" style="left:762.17px;top:317.0px;font-size:13px;letter-spacing:1.13px;color:#000;">about</span><span class="t" style="left:803.23px;top:317.0px;font-size:13px;letter-spacing:0.59px;color:#000;">you.ac3</span>
<span class="t" style="left:921.54px;top:317.0px;font-size:13px;letter-spacing:-0.45px;color:#000;">AC3</span><span class="t" style="left:949.77px;top:317.0px;font-size:13px;letter-spacing:0.82px;color:#000;">audio</span><span class="t" style="left:988.86px;top:317.0px;font-size:13px;letter-spacing:0.47px;color:#000;">file</span>
<svg style="left:44px;top:337.4px" width="17" height="15" viewBox="0 0 17 15"><polygon points="0.8,6.6 8.2,13.2 15.6,7.6 15.8,8.8 8.4,14.4 0.8,7.6" fill="#7c88a8"/><polygon points="0.7,6.1 6.7,0.6 15.5,7.3 8.3,13" fill="#d6e0fb" stroke="#242834" stroke-width="1.15" stroke-dasharray="2 0.5" stroke-linejoin="round"/><polygon points="3.4,6.1 6.8,3 9.6,5.1 6,8.2" fill="#ffffff" opacity="0.75"/><ellipse cx="7.3" cy="8" rx="1" ry="1.3" fill="#000"/><ellipse cx="11" cy="6.5" rx="1.2" ry="0.95" fill="#000" transform="rotate(-30 11 6.5)"/><path d="M4.2 4.7 L6.2 3" stroke="#1a4a9a" stroke-width="1.4"/></svg>
<span class="t" style="left:64.84px;top:337.0px;font-size:13px;letter-spacing:0px;color:#000;">5</span>
<span class="t" style="left:113.4px;top:337.0px;font-size:13px;letter-spacing:0.8px;color:#000;">strings</span><span class="t" style="left:160.52px;top:337.0px;font-size:13px;letter-spacing:0.91px;color:#000;">in</span><span class="t" style="left:175.56px;top:337.0px;font-size:13px;letter-spacing:1.58px;color:#000;">do</span>
<span class="t" style="left:283.7px;top:337.0px;font-size:13px;letter-spacing:0.64px;color:#000;">Space</span><span class="t" style="left:327.17px;top:337.0px;font-size:13px;letter-spacing:0.37px;color:#000;">galaxy</span>
<span class="t" style="left:398.7px;top:337.0px;font-size:13px;letter-spacing:0.32px;color:#000;">Compilation</span><span class="t" style="left:474.75px;top:337.0px;font-size:13px;letter-spacing:0px;color:#000;">1</span>
<span class="t" style="left:525.1px;top:337.0px;font-size:13px;letter-spacing:0.87px;color:#000;">5:42</span>
<span class="t" style="left:570.1px;top:337.0px;font-size:13px;letter-spacing:1.04px;color:#000;">384</span><span class="t" style="left:597.83px;top:337.0px;font-size:13px;letter-spacing:0.85px;color:#000;">kbit</span>
<span class="t" style="left:637.7px;top:337.0px;font-size:13px;letter-spacing:0.9px;color:#000;">15.69</span><span class="t" style="left:677.62px;top:337.0px;font-size:13px;letter-spacing:-0.45px;color:#000;">MiB</span>
<span class="t" style="left:716.1px;top:337.0px;font-size:13px;letter-spacing:1.6px;color:#000;">05</span><span class="t" style="left:736.02px;top:337.0px;font-size:13px;letter-spacing:0px;color:#000;">-</span><span class="t" style="left:744.21px;top:337.0px;font-size:13px;letter-spacing:0.81px;color:#000;">strings</span><span class="t" style="left:791.38px;top:337.0px;font-size:13px;letter-spacing:0.92px;color:#000;">in</span><span class="t" style="left:806.44px;top:337.0px;font-size:13px;letter-spacing:0.83px;color:#000;">do.ac3</span>
<span class="t" style="left:921.54px;top:337.0px;font-size:13px;letter-spacing:-0.45px;color:#000;">AC3</span><span class="t" style="left:949.77px;top:337.0px;font-size:13px;letter-spacing:0.82px;color:#000;">audio</span><span class="t" style="left:988.86px;top:337.0px;font-size:13px;letter-spacing:0.47px;color:#000;">file</span>
<div class="frame" style="left:477px;top:482px;width:364px;height:202px;"></div>
<div class="tab" style="left:477px;top:461px;width:129px;height:22px;">
<div class="btn" style="left:4px;top:4px;width:13px;height:13px"></div>
<div class="btn" style="left:112px;top:7px;width:10px;height:10px"></div>
<div class="btn" style="left:109px;top:4px;width:7px;height:7px"></div>
</div>
<div style="left:479px;top:482px;width:126px;height:2px;background:#e5e5e5;"></div>
<span class="t" style="left:512.6999999999999px;top:465.5px;font-size:13px;letter-spacing:0.91px;color:#454545;font-weight:bold;">Playlist</span>
<div class="inner" style="left:481px;top:486px;width:356px;height:194px;"></div>
<div class="menu" style="left:482px;top:487px;width:354px;height:19px;"></div>
<span class="t" style="left:489.7px;top:489.0px;font-size:13px;letter-spacing:0.3px;color:#000;">Playlist</span>
<span class="t" style="left:549.9px;top:489.0px;font-size:13px;letter-spacing:0.6px;color:#000;">Edit</span>
<div class="white" style="left:482px;top:506px;width:340px;height:173px;"></div>
<div style="left:482px;top:525px;width:340px;height:19px;background:#a9a9a9;"></div>
<div style="left:482px;top:563px;width:340px;height:19px;background:#f0f0f0;"></div>
<div class="sb" style="left:822px;top:506px;width:14px;height:159px;box-shadow:inset 1px 0 0 #f8f8f8;"></div>
<div class="sbtn" style="left:823px;top:506px;width:13px;height:14px;border-bottom:1px solid #a0a0a0;"><svg style="left:3px;top:3.4px" width="7" height="5.5" viewBox="0 0 7 5.5"><path d="M0.8 4.6 L3.5 1.6 L6.2 4.6" fill="none" stroke="#b6b6b6" stroke-width="1.9"/></svg></div>
<div class="sbtn" style="left:823px;top:651px;width:13px;height:14px;border-top:1px solid #a0a0a0;"><svg style="left:3px;top:3.4px" width="7" height="5.5" viewBox="0 0 7 5.5"><path d="M0.8 0.9 L3.5 3.9 L6.2 0.9" fill="none" stroke="#b6b6b6" stroke-width="1.9"/></svg></div>
<div style="left:823px;top:665px;width:14px;height:1px;background:#a0a0a0;"></div>
<div style="left:823px;top:666px;width:17px;height:17px;background:linear-gradient(135deg,#f2f2f2,#e4e4e4);"></div>
<svg style="left:486px;top:530px" width="8" height="9" viewBox="0 0 8 9"><polygon points="0.5,0.5 7.5,4.5 0.5,8.5" fill="#38e020" stroke="#1a7a10" stroke-width="0.8"/></svg>
<span class="t" style="left:499.1px;top:509.0px;font-size:13px;letter-spacing:1.55px;color:#000;">01</span><span class="t" style="left:518.95px;top:509.0px;font-size:13px;letter-spacing:0px;color:#000;">-</span><span class="t" style="left:527.11px;top:509.0px;font-size:13px;letter-spacing:0.63px;color:#000;">Approach</span><span class="t" style="left:591.15px;top:509.0px;font-size:13px;letter-spacing:1.17px;color:#000;">of</span><span class="t" style="left:607.16px;top:509.0px;font-size:13px;letter-spacing:1.47px;color:#000;">the</span><span class="t" style="left:632.17px;top:509.0px;font-size:13px;letter-spacing:0.88px;color:#000;">gate.ac3</span>
<span class="t" style="left:499.1px;top:528.0px;font-size:13px;letter-spacing:1.54px;color:#000;">02</span><span class="t" style="left:518.94px;top:528.0px;font-size:13px;letter-spacing:0px;color:#000;">-</span><span class="t" style="left:527.1px;top:528.0px;font-size:13px;letter-spacing:0.51px;color:#000;">Visionary.ac3</span>
<span class="t" style="left:499.1px;top:547.0px;font-size:13px;letter-spacing:1.57px;color:#000;">03</span><span class="t" style="left:518.98px;top:547.0px;font-size:13px;letter-spacing:0px;color:#000;">-</span><span class="t" style="left:527.15px;top:547.0px;font-size:13px;letter-spacing:0.19px;color:#000;">Rising</span><span class="t" style="left:568.22px;top:547.0px;font-size:13px;letter-spacing:1.18px;color:#000;">of</span><span class="t" style="left:584.25px;top:547.0px;font-size:13px;letter-spacing:0.65px;color:#000;">Phenobe.ac3</span>
<span class="t" style="left:499.1px;top:566.0px;font-size:13px;letter-spacing:1.54px;color:#000;">04</span><span class="t" style="left:518.94px;top:566.0px;font-size:13px;letter-spacing:0px;color:#000;">-</span><span class="t" style="left:527.1px;top:566.0px;font-size:13px;letter-spacing:-0.22px;color:#000;">All</span><span class="t" style="left:545.1px;top:566.0px;font-size:13px;letter-spacing:1.12px;color:#000;">about</span><span class="t" style="left:586.1px;top:566.0px;font-size:13px;letter-spacing:0.58px;color:#000;">you.ac3</span>
<span class="t" style="left:499.1px;top:585.0px;font-size:13px;letter-spacing:1.53px;color:#000;">05</span><span class="t" style="left:518.92px;top:585.0px;font-size:13px;letter-spacing:0px;color:#000;">-</span><span class="t" style="left:527.08px;top:585.0px;font-size:13px;letter-spacing:0.78px;color:#000;">strings</span><span class="t" style="left:574.04px;top:585.0px;font-size:13px;letter-spacing:0.88px;color:#000;">in</span><span class="t" style="left:589.03px;top:585.0px;font-size:13px;letter-spacing:0.79px;color:#000;">do.ac3</span>
<div class="frame" style="left:184px;top:610px;width:519px;height:90px;"></div>
<div class="tab act" style="left:184px;top:589px;width:201px;height:22px;">
<div class="btn" style="left:4px;top:4px;width:13px;height:13px"></div>
<div class="btn" style="left:184px;top:7px;width:10px;height:10px"></div>
<div class="btn" style="left:181px;top:4px;width:7px;height:7px"></div>
</div>
<div style="left:186px;top:610px;width:198px;height:2px;background:linear-gradient(to bottom,#ffc700 50%,#e8e8ea 50%);"></div>
<span class="t" style="left:220.2px;top:593.5px;font-size:13px;letter-spacing:1.66px;color:#000;font-weight:bold;">02</span><span class="t" style="left:240.7px;top:593.5px;font-size:13px;letter-spacing:0px;color:#000;font-weight:bold;">-</span><span class="t" style="left:249.41px;top:593.5px;font-size:13px;letter-spacing:1.09px;color:#000;font-weight:bold;">Visionary.ac3</span>
<div class="inner" style="left:188px;top:614px;width:511px;height:82px;"></div>
<div class="menu" style="left:189px;top:615px;width:509px;height:18px;"></div>
<span class="t" style="left:196.4px;top:617.0px;font-size:13px;letter-spacing:0.39px;color:#000;">MediaPlayer</span>
<span class="t" style="left:288.7px;top:617.0px;font-size:13px;letter-spacing:0.49px;color:#000;">Audio</span>
<span class="t" style="left:339.9px;top:617.0px;font-size:13px;letter-spacing:0.8px;color:#9a9a9a;">Video</span>
<span class="t" style="left:392.4px;top:617.0px;font-size:13px;letter-spacing:0.84px;color:#000;">Attributes</span>
<div style="left:698px;top:677px;width:5px;height:1px;background:#9a9a9a;"></div>
<div style="left:680px;top:695px;width:1px;height:5px;background:#9a9a9a;"></div>
<div style="left:197px;top:642px;width:455px;height:14px;border-radius:7px;border:1px solid #6a6a6a;background:linear-gradient(to bottom,#b4b4b4,#d2d2d2);box-shadow:inset 0 1px 1px rgba(0,0,0,0.2);overflow:hidden;"><div style="left:-1px;top:-1px;width:274px;height:14px;background:linear-gradient(to bottom,#6a6a6a,#9c9c9c);"></div></div>
<svg style="left:465px;top:653px" width="12" height="8" viewBox="0 0 12 8"><polygon points="6,0.5 11.5,7.5 0.5,7.5" fill="#e82020" stroke="#901010" stroke-width="0.8"/><polygon points="6,2.6 8.4,6 3.6,6" fill="#ff7060"/></svg>
<span class="t" style="left:660.1999999999999px;top:642.4px;font-size:13px;letter-spacing:0.57px;color:#808080;">-2:29</span>
<div style="left:197px;top:665px;width:203px;height:22px;border:1px solid #8c8c8c;background:linear-gradient(to bottom,#f4f4f4,#dadada);box-shadow:inset 1px 1px 0 #fff;"></div>
<div style="left:252px;top:666px;width:1px;height:20px;background:#a8a8a8;box-shadow:1px 0 0 #fafafa;"></div>
<div style="left:308px;top:666px;width:1px;height:20px;background:#a8a8a8;box-shadow:1px 0 0 #fafafa;"></div>
<div style="left:344px;top:666px;width:1px;height:20px;background:#a8a8a8;box-shadow:1px 0 0 #fafafa;"></div>
<svg style="left:213px;top:670px" width="22" height="11" viewBox="0 0 22 11"><rect x="0.6" y="0.8" width="2" height="9.4" fill="#505050"/><polygon points="11,0.8 11,10.2 2.8,5.5" fill="#505050"/><polygon points="20.6,0.8 20.6,10.2 11.4,5.5" fill="#505050"/></svg>
<svg style="left:267px;top:669px" width="27" height="13" viewBox="0 0 27 13"><polygon points="1,0.8 12.4,6.5 1,12.2" fill="#50e028" stroke="#2a8a18" stroke-width="1"/><rect x="16" y="2" width="3" height="9.4" fill="#505050"/><rect x="22" y="2" width="3" height="9.4" fill="#505050"/></svg>
<div style="left:321px;top:671px;width:9.4px;height:9.4px;background:#505050;"></div>
<svg style="left:360px;top:670px" width="22" height="11" viewBox="0 0 22 11"><polygon points="1.2,0.8 1.2,10.2 10.4,5.5" fill="#505050"/><polygon points="10.8,0.8 10.8,10.2 19,5.5" fill="#505050"/><rect x="19.2" y="0.8" width="2" height="9.4" fill="#505050"/></svg>
<svg style="left:406px;top:668px" width="18" height="15" viewBox="0 0 18 15"><polygon points="1,5 4,5 8,1.4 8,13.6 4,10 1,10" fill="#585858"/><path d="M10.4 4.6 Q12.2 7.5 10.4 10.4" fill="none" stroke="#484848" stroke-width="1.7"/><path d="M12.6 2.8 Q15.6 7.5 12.6 12.2" fill="none" stroke="#686868" stroke-width="1.5"/><path d="M14.8 1.4 Q18.4 7.5 14.8 13.6" fill="none" stroke="#8c8c8c" stroke-width="1.3"/></svg>
<div style="left:433px;top:672px;width:149px;height:8px;border-radius:4px;border:1px solid #7a7a7a;background:linear-gradient(to bottom,#b0b0b0,#d0d0d0);overflow:hidden;"><div style="left:-1px;top:-1px;width:76px;height:8px;background:linear-gradient(to bottom,#9aec30,#58b810);"></div></div>
<div style="left:501px;top:669px;width:13px;height:13px;border:1px solid #6a6a6a;background:linear-gradient(135deg,#ffffff,#d4d4d4);box-shadow:inset 1px 1px 0 #fff;"><div style="left:5px;top:2px;width:1px;height:7px;background:#a0a0a0;"></div></div>
<div style="left:592px;top:665px;width:98px;height:22px;border:1px solid #8c8c8c;background:#000;overflow:hidden;"><div style="left:0;top:0;width:96px;height:20px;background:repeating-linear-gradient(to right,#0c300c 0 1px,#021002 1px 2px);"></div><div style="left:0;top:0;width:17px;height:9px;background:repeating-linear-gradient(to right,#2a9a2a 0 1px,#0a300a 1px 2px);"></div><div style="left:0;top:11px;width:19px;height:9px;background:repeating-linear-gradient(to right,#2a9a2a 0 1px,#0a300a 1px 2px);"></div><div style="left:16px;top:0;width:1px;height:9px;background:#50ff50;"></div><div style="left:18px;top:11px;width:1px;height:9px;background:#50ff50;"></div><div style="left:33px;top:0;width:1px;height:20px;background:#ffd040;"></div><div style="left:35px;top:0;width:1px;height:20px;background:#9a7426;"></div><div style="left:0;top:9.5px;width:96px;height:1px;background:#000;"></div></div>
<div style="left:1010px;top:0px;width:142px;height:202px;background:#d8d8d8;border-left:1px solid #8c8c8c;border-bottom:1px solid #8c8c8c;"></div>
<div style="left:1011px;top:0px;width:141px;height:23px;background:linear-gradient(to bottom,#f2f2f2,#dadada);border-bottom:1px solid #9a9a9a;"></div>
<svg style="left:1048px;top:0px" width="66" height="22" viewBox="0 0 66 22">
<defs><linearGradient id="lf" x1="0" y1="0" x2="0" y2="1"><stop offset="0" stop-color="#0a3f9c"/><stop offset="1" stop-color="#3486ea"/></linearGradient></defs>
<path d="M1 12.5 C4 14.2 8.5 15.2 17.2 15.6 C19 14 20.6 13.2 22.2 12.5 C24 11.6 25.6 11.2 27.2 10.9 L28.5 12.8 L30 11.2 C32.2 9.6 34.4 8.2 36.6 6.9 C39.2 5.6 42 4.6 44.8 3.7 L45.7 6.9 C46.2 5.2 47 3.8 47.9 2.8 C50 2.2 56 2.2 63.2 2.8 C61.8 4.6 60.2 6.4 58.5 8.1 L56 12.5 C55 13.8 53.6 15 52.2 16.2 L46.6 17.2 L48.2 19 C47.6 20 46.8 21 46 22 L22.2 22 C21 20.8 20 19.8 19.1 18.8 L17.2 17.8 C10 17.4 5 16.4 1.3 14.7 Z" fill="url(#lf)"/><path d="M1 12.5 C4 14.2 8.5 15.2 17.2 15.6 L17.2 17.8 C10 17.4 5 16.4 1.3 14.7 Z" fill="#123a80" opacity="0.7"/>
</svg>
<div style="left:1011px;top:23px;width:141px;height:22px;background:#c8c8c8;border-bottom:1px solid #a0a0a0;"></div>
<div style="left:1016px;top:26px;width:7px;height:16px;background:#38385a;border:1px solid #000;"><div style="left:0;top:7px;width:5px;height:7px;background:#a4a4e4;"></div></div>
<div style="left:1025px;top:26px;width:7px;height:16px;background:#38385a;border:1px solid #000;"><div style="left:0;top:10.6px;width:5px;height:3.4px;background:linear-gradient(to bottom,#b884b0,#e0a0cc);"></div></div>
<svg style="left:1033px;top:25px" width="17" height="18" viewBox="0 0 17 18">
<path d="M7 6 C11.4 6.6 4.6 10.4 9.6 11.6" fill="none" stroke="#101010" stroke-width="1.5"/>
<circle cx="4.4" cy="4.6" r="3.5" fill="#1c8cd0" stroke="#1a7a3a" stroke-width="0.8"/><path d="M1.6 3 Q2.6 1.4 4 1.4 L3 3.6 Z" fill="#38c060"/><path d="M6 6.6 Q7.6 5 7 3 L5.6 5 Z" fill="#2cae50"/><circle cx="3.6" cy="3.6" r="1" fill="#58c8f8"/>
<circle cx="3.5" cy="14.4" r="2.3" fill="#20ee30" stroke="#061806" stroke-width="1"/>
<polygon points="9.4,9.4 13.4,7.4 16.2,8.6 16.2,14 12.4,16.4 9.4,15" fill="#e0e0e0" stroke="#707070" stroke-width="0.6"/><polygon points="12.6,10.8 16.2,8.8 16.2,14 12.6,16.2" fill="#a0a0a0"/>
</svg>
<svg style="left:1053px;top:26px" width="15" height="16" viewBox="0 0 15 16">
<polygon points="12,13 14.4,14.6 6,15.8 4,14.6" fill="#808080"/>
<polygon points="1,3.4 6.4,0.6 12.4,2.4 12.4,12.4 6.6,15.2 1,12.6" fill="#f0f0f0" stroke="#808080" stroke-width="0.7"/>
<polygon points="8,4.2 12.2,2.6 12.2,12.2 8,14.4" fill="#b8b8b8"/>
<ellipse cx="4.8" cy="8.6" rx="3.2" ry="4" fill="#202020"/><ellipse cx="5.4" cy="8.8" rx="1.6" ry="2.2" fill="#606060"/>
<circle cx="7" cy="13.2" r="0.7" fill="#20d020"/>
</svg>
<span class="t" style="left:1084.8px;top:28.0px;font-size:13px;letter-spacing:0.96px;color:#000;">10:08</span><span class="t" style="left:1124.78px;top:28.0px;font-size:13px;letter-spacing:-0.45px;color:#000;">PM</span>
<div style="left:1148px;top:25px;width:1px;height:16px;background:repeating-linear-gradient(to bottom,#5c5c5c 0 1px,transparent 1px 3px);"></div>
<div style="left:1149px;top:26px;width:1px;height:16px;background:repeating-linear-gradient(to bottom,#f0f0f0 0 1px,transparent 1px 3px);"></div>
<div style="left:1011px;top:45px;width:141px;height:37px;background:linear-gradient(to bottom,#e8e8e8,#d2d2d2);border-bottom:1px solid #b0b0b0;box-shadow:inset 0 1px 0 #f8f8f8;"></div>
<svg style="left:1018px;top:47px" width="34" height="34" viewBox="0 0 34 34">
<ellipse cx="26.5" cy="26" rx="7.2" ry="5.6" fill="#7e7e7e"/>
<path d="M27 6.4 C28.4 4.8 29.4 2.8 30.3 0.9 C31.6 2.4 31 5.2 29.6 7.6 Z" fill="#b8804c" stroke="#1a0c04" stroke-width="1.1" stroke-linejoin="round"/>
<path d="M12 5 C16 3.4 24 3.4 27.4 4.6 C29.2 7 28.9 12 28.6 15 L32.5 21.4 C32.7 23.6 30.6 24.7 29.4 24.3 L25.8 23.3 L25 19.4 L20.4 17.8 L20.8 30.2 C20 32.6 16.6 33.2 15.2 31.4 L15.8 17 C13 16.6 11 14 10 12 Z" fill="#bb8552" stroke="#1a0c04" stroke-width="1.1" stroke-linejoin="round"/>
<path d="M2.6 5 C4.6 1.8 11.6 1.4 14.8 4.4 C17.2 6.8 17.4 11.6 15.2 14 C12 16.2 7.4 15.8 4.6 12.8 C2.6 10.6 1.6 7.4 2.6 5 Z" fill="#c28c5a" stroke="#1a0c04" stroke-width="1.1"/>
<path d="M3 4.4 C1.2 5.4 0.9 8.4 2.6 9.8 L5 6.8 Z" fill="#dca488" stroke="#2a1608" stroke-width="0.7"/>
<path d="M13.4 4 C17 5.2 18.6 9.4 16.6 13.4 L14 10.2 Z" fill="#a87040" stroke="#2a1608" stroke-width="0.7"/>
<circle cx="8.8" cy="9.8" r="1.1" fill="#3a2410"/>
<circle cx="6.4" cy="7.4" r="0.6" fill="#e8a8b8"/><circle cx="10.6" cy="6.6" r="0.6" fill="#f0b040"/><circle cx="11.6" cy="11.4" r="0.6" fill="#e8a8b8"/><circle cx="23" cy="8.6" r="0.6" fill="#f0b040"/><circle cx="24.6" cy="12.6" r="0.6" fill="#e8a8b8"/>
<polygon points="1.2,12.2 13.4,19 13.4,29.4 1.2,23" fill="#f4f4f4" stroke="#0a0a0a" stroke-width="1.1" stroke-linejoin="round"/>
<polygon points="13.6,20.6 16.6,20 16.6,28.4 13.6,29.6" fill="#dcdcdc" stroke="#0a0a0a" stroke-width="0.8"/>
<polygon points="1.6,12.6 7,15.6 7,17.4 1.6,14.6" fill="#ffd020"/>
<polygon points="3,16.4 12.2,21.2 12.2,27.6 3,22.8" fill="#ffffff" stroke="#c4c4c4" stroke-width="0.6"/>
<polygon points="20.6,18.2 25,19.6 25,22.6 20.8,22.6" fill="#f0f0f0"/>
</svg>
<span class="t" style="left:1057.4px;top:57.0px;font-size:13px;letter-spacing:0.77px;color:#000;">Tracker</span>
<svg style="left:1142px;top:60px" width="7" height="5" viewBox="0 0 7 5"><path d="M0.6 4.4 L3.5 1.2 L6.4 4.4" fill="none" stroke="#a0a0a0" stroke-width="1.5"/></svg>
<div style="left:1011px;top:82px;width:141px;height:40px;background:#c8c8c8;"></div>
<div style="left:1011px;top:82px;width:6px;height:40px;background:#b4b4b4;"></div>
<svg style="left:1022px;top:86px" width="14" height="15" viewBox="0 0 14 15"><rect x="0.5" y="2.6" width="12" height="10.8" fill="#fff"/><rect x="1" y="1" width="7.4" height="2.2" fill="#ffc61e"/><rect x="1" y="2.6" width="7.4" height="0.8" fill="#ffe48a"/><path d="M0.5 13.4 V0.5 H8.4 V2.6 H12.4" stroke="#5c5c5c" fill="none" stroke-width="1"/><path d="M12.4 2.2 V13.4 H0.2" stroke="#050505" fill="none" stroke-width="1.3"/><path d="M1.4 12.4 H11.4 V4" stroke="#d4d4d4" stroke-width="0.8" fill="none"/></svg>
<span class="t" style="left:1040.8px;top:86.0px;font-size:13px;letter-spacing:0.37px;color:#000;">Compilation</span><span class="t" style="left:1117.43px;top:86.0px;font-size:13px;letter-spacing:0px;color:#000;">1</span>
<svg style="left:1022px;top:106px" width="14" height="15" viewBox="0 0 14 15"><rect x="0.5" y="2.6" width="12" height="10.8" fill="#fff"/><rect x="1" y="1" width="7.4" height="2.2" fill="#ffc61e"/><rect x="1" y="2.6" width="7.4" height="0.8" fill="#ffe48a"/><path d="M0.5 13.4 V0.5 H8.4 V2.6 H12.4" stroke="#5c5c5c" fill="none" stroke-width="1"/><path d="M12.4 2.2 V13.4 H0.2" stroke="#050505" fill="none" stroke-width="1.3"/><path d="M1.4 12.4 H11.4 V4" stroke="#d4d4d4" stroke-width="0.8" fill="none"/></svg>
<span class="t" style="left:1040.8000000000002px;top:106.0px;font-size:13px;letter-spacing:0.52px;color:#000;">Gegensinn</span>
<div style="left:1011px;top:122px;width:141px;height:38px;background:linear-gradient(to bottom,#e8e8e8,#d2d2d2);border-bottom:1px solid #b0b0b0;box-shadow:inset 0 1px 0 #f8f8f8;"></div>
<svg style="left:1018px;top:125px" width="32" height="34" viewBox="0 0 32 34">
<ellipse cx="25" cy="26.6" rx="7.6" ry="5.4" fill="#8a8a8a"/>
<polygon points="3.4,10 17,14 17,32.4 3.4,25.6" fill="#8adcf4" stroke="#0a0a0a" stroke-width="1" stroke-linejoin="round"/>
<polygon points="17,14 24.4,8.6 24.4,25.6 17,32.4" fill="#1a98c4" stroke="#0a0a0a" stroke-width="1" stroke-linejoin="round"/>
<path d="M5 13 L7 22 M9 14 L10 25 M13 15.4 L13.6 28" stroke="#d8f6ff" stroke-width="1.2"/>
<ellipse cx="10.4" cy="18.6" rx="3.4" ry="2" fill="#f8e040" transform="rotate(14 10.4 18.6)"/><ellipse cx="10.4" cy="18.6" rx="1.8" ry="0.9" fill="#e83020" transform="rotate(14 10.4 18.6)"/>
<path d="M2.4 9.8 C1 7 3 4.6 5 5 C5 2.6 8 1.6 10 2.6 C12 0.6 16 1 17 3 C19 2 22 3 22.4 5 C24.6 4 26.4 5.4 25.4 7.6 L24.4 9 L17 14.6 C13 13.6 6 12 2.4 9.8 Z" fill="#f8dc8c" stroke="#1a1000" stroke-width="0.9" stroke-linejoin="round"/>
<path d="M7 6 C9 8 12 9 14 8 M11 4.6 C13 6 16 6.6 18 6" stroke="#c8a050" stroke-width="1" fill="none"/>
<ellipse cx="3.6" cy="28.6" rx="2.6" ry="1.5" fill="#f4c840" stroke="#1a1000" stroke-width="0.7"/><ellipse cx="8.6" cy="31.4" rx="2" ry="1.4" fill="#f4c840" stroke="#1a1000" stroke-width="0.7"/>
</svg>
<span class="t" style="left:1057.7px;top:135.0px;font-size:13px;letter-spacing:0.35px;color:#000;">MediaPlayer</span>
<svg style="left:1142px;top:138px" width="7" height="5" viewBox="0 0 7 5"><path d="M0.6 4.4 L3.5 1.2 L6.4 4.4" fill="none" stroke="#a0a0a0" stroke-width="1.5"/></svg>
<div style="left:1011px;top:160px;width:141px;height:41px;background:#c8c8c8;"></div>
<div style="left:1011px;top:160px;width:6px;height:41px;background:#b4b4b4;"></div>
<svg style="left:1022px;top:164px" width="14" height="15" viewBox="0 0 14 15"><rect x="0.5" y="2.6" width="12" height="10.8" fill="#fff"/><rect x="1" y="1" width="7.4" height="2.2" fill="#ffc61e"/><rect x="1" y="2.6" width="7.4" height="0.8" fill="#ffe48a"/><path d="M0.5 13.4 V0.5 H8.4 V2.6 H12.4" stroke="#5c5c5c" fill="none" stroke-width="1"/><path d="M12.4 2.2 V13.4 H0.2" stroke="#050505" fill="none" stroke-width="1.3"/><path d="M1.4 12.4 H11.4 V4" stroke="#d4d4d4" stroke-width="0.8" fill="none"/></svg>
<span class="t" style="left:1040.8px;top:164.0px;font-size:13px;letter-spacing:1.55px;color:#000;">02</span><span class="t" style="left:1060.66px;top:164.0px;font-size:13px;letter-spacing:0px;color:#000;">-</span><span class="t" style="left:1068.83px;top:164.0px;font-size:13px;letter-spacing:0.45px;color:#000;">Visi...ary.ac3</span>
<svg style="left:1022px;top:184px" width="14" height="15" viewBox="0 0 14 15"><rect x="0.5" y="2.6" width="12" height="10.8" fill="#fff"/><rect x="1" y="1" width="7.4" height="2.2" fill="#ffc61e"/><rect x="1" y="2.6" width="7.4" height="0.8" fill="#ffe48a"/><path d="M0.5 13.4 V0.5 H8.4 V2.6 H12.4" stroke="#5c5c5c" fill="none" stroke-width="1"/><path d="M12.4 2.2 V13.4 H0.2" stroke="#050505" fill="none" stroke-width="1.3"/><path d="M1.4 12.4 H11.4 V4" stroke="#d4d4d4" stroke-width="0.8" fill="none"/></svg>
<span class="t" style="left:1040.8000000000002px;top:184.0px;font-size:13px;letter-spacing:0.22px;color:#000;">Playlist</span>
</div></body></html>
